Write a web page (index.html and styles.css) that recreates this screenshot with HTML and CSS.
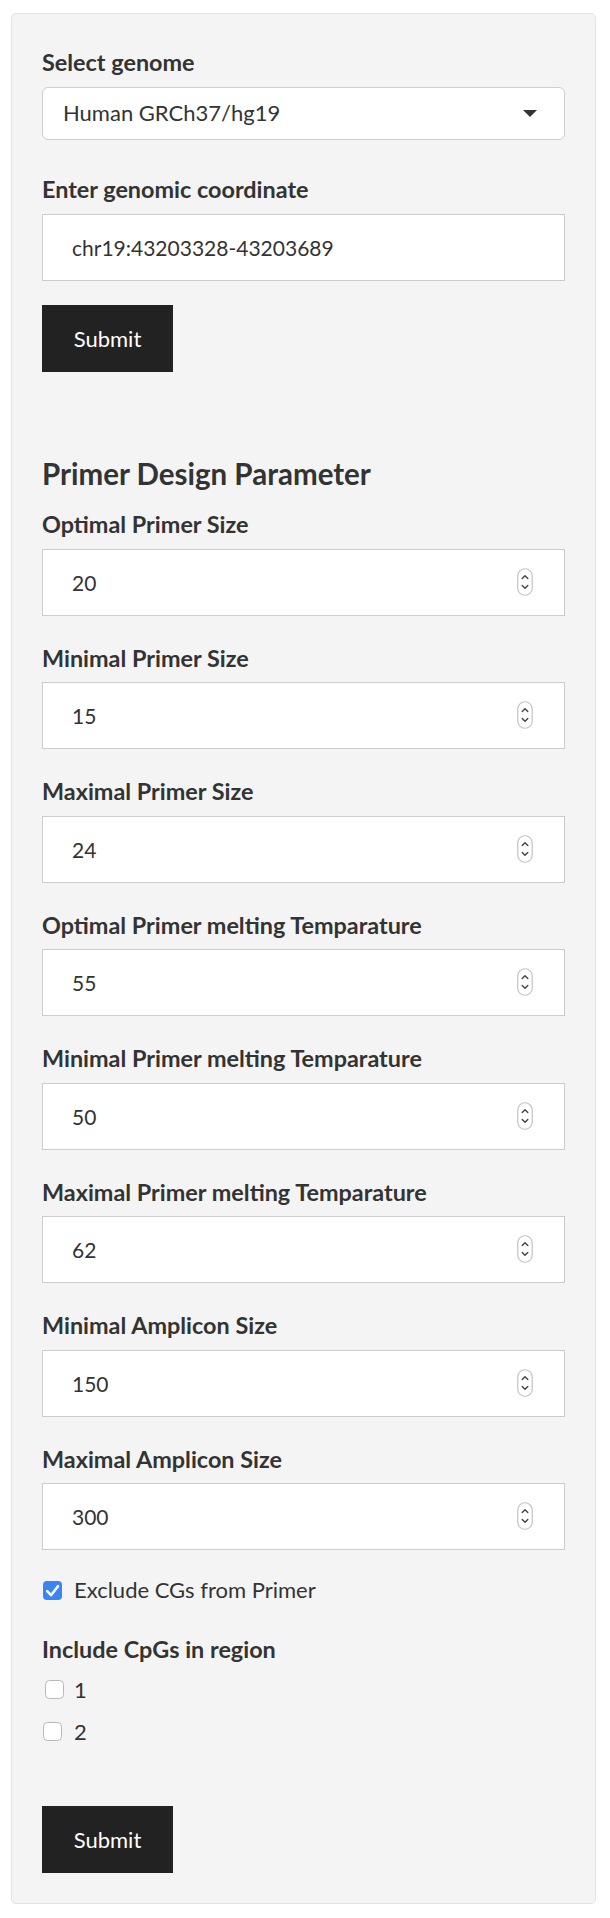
FILE: index.html
```html
<!DOCTYPE html>
<html lang="en">
<head>
<meta charset="utf-8">
<title>Primer Design</title>
<link rel="stylesheet" href="styles.css">
</head>
<body>
<form class="well">
  <div class="form-group select-group">
    <label class="control-label">Select genome</label>
    <div class="select-box">
      <span>Human GRCh37/hg19</span>
      <span class="caret"></span>
    </div>
  </div>

  <div class="form-group">
    <label class="control-label" for="coord">Enter genomic coordinate</label>
    <input class="text-input" id="coord" type="text" value="chr19:43203328-43203689">
  </div>
  <button class="btn" type="button">Submit</button>

  <h4 class="section-title">Primer Design Parameter</h4>

  <div class="form-group">
    <label class="control-label">Optimal Primer Size</label>
    <div class="num-box"><input class="num-input" type="number" value="20"><svg class="spin" width="16" height="28" viewBox="0 0 16 28"><rect x="0.75" y="0.75" width="14.5" height="26.5" rx="7.25" fill="#fff" stroke="#c4c4c4" stroke-width="1.2"/><path d="M5.2 10.6 L8 7.8 L10.8 10.6" fill="none" stroke="#444" stroke-width="1.4" stroke-linecap="round" stroke-linejoin="round"/><path d="M5.2 17.4 L8 20.2 L10.8 17.4" fill="none" stroke="#444" stroke-width="1.4" stroke-linecap="round" stroke-linejoin="round"/></svg></div>
  </div>
  <div class="form-group">
    <label class="control-label">Minimal Primer Size</label>
    <div class="num-box"><input class="num-input" type="number" value="15"><svg class="spin" width="16" height="28" viewBox="0 0 16 28"><rect x="0.75" y="0.75" width="14.5" height="26.5" rx="7.25" fill="#fff" stroke="#c4c4c4" stroke-width="1.2"/><path d="M5.2 10.6 L8 7.8 L10.8 10.6" fill="none" stroke="#444" stroke-width="1.4" stroke-linecap="round" stroke-linejoin="round"/><path d="M5.2 17.4 L8 20.2 L10.8 17.4" fill="none" stroke="#444" stroke-width="1.4" stroke-linecap="round" stroke-linejoin="round"/></svg></div>
  </div>
  <div class="form-group">
    <label class="control-label">Maximal Primer Size</label>
    <div class="num-box"><input class="num-input" type="number" value="24"><svg class="spin" width="16" height="28" viewBox="0 0 16 28"><rect x="0.75" y="0.75" width="14.5" height="26.5" rx="7.25" fill="#fff" stroke="#c4c4c4" stroke-width="1.2"/><path d="M5.2 10.6 L8 7.8 L10.8 10.6" fill="none" stroke="#444" stroke-width="1.4" stroke-linecap="round" stroke-linejoin="round"/><path d="M5.2 17.4 L8 20.2 L10.8 17.4" fill="none" stroke="#444" stroke-width="1.4" stroke-linecap="round" stroke-linejoin="round"/></svg></div>
  </div>
  <div class="form-group">
    <label class="control-label">Optimal Primer melting Temparature</label>
    <div class="num-box"><input class="num-input" type="number" value="55"><svg class="spin" width="16" height="28" viewBox="0 0 16 28"><rect x="0.75" y="0.75" width="14.5" height="26.5" rx="7.25" fill="#fff" stroke="#c4c4c4" stroke-width="1.2"/><path d="M5.2 10.6 L8 7.8 L10.8 10.6" fill="none" stroke="#444" stroke-width="1.4" stroke-linecap="round" stroke-linejoin="round"/><path d="M5.2 17.4 L8 20.2 L10.8 17.4" fill="none" stroke="#444" stroke-width="1.4" stroke-linecap="round" stroke-linejoin="round"/></svg></div>
  </div>
  <div class="form-group">
    <label class="control-label">Minimal Primer melting Temparature</label>
    <div class="num-box"><input class="num-input" type="number" value="50"><svg class="spin" width="16" height="28" viewBox="0 0 16 28"><rect x="0.75" y="0.75" width="14.5" height="26.5" rx="7.25" fill="#fff" stroke="#c4c4c4" stroke-width="1.2"/><path d="M5.2 10.6 L8 7.8 L10.8 10.6" fill="none" stroke="#444" stroke-width="1.4" stroke-linecap="round" stroke-linejoin="round"/><path d="M5.2 17.4 L8 20.2 L10.8 17.4" fill="none" stroke="#444" stroke-width="1.4" stroke-linecap="round" stroke-linejoin="round"/></svg></div>
  </div>
  <div class="form-group">
    <label class="control-label">Maximal Primer melting Temparature</label>
    <div class="num-box"><input class="num-input" type="number" value="62"><svg class="spin" width="16" height="28" viewBox="0 0 16 28"><rect x="0.75" y="0.75" width="14.5" height="26.5" rx="7.25" fill="#fff" stroke="#c4c4c4" stroke-width="1.2"/><path d="M5.2 10.6 L8 7.8 L10.8 10.6" fill="none" stroke="#444" stroke-width="1.4" stroke-linecap="round" stroke-linejoin="round"/><path d="M5.2 17.4 L8 20.2 L10.8 17.4" fill="none" stroke="#444" stroke-width="1.4" stroke-linecap="round" stroke-linejoin="round"/></svg></div>
  </div>
  <div class="form-group">
    <label class="control-label">Minimal Amplicon Size</label>
    <div class="num-box"><input class="num-input" type="number" value="150"><svg class="spin" width="16" height="28" viewBox="0 0 16 28"><rect x="0.75" y="0.75" width="14.5" height="26.5" rx="7.25" fill="#fff" stroke="#c4c4c4" stroke-width="1.2"/><path d="M5.2 10.6 L8 7.8 L10.8 10.6" fill="none" stroke="#444" stroke-width="1.4" stroke-linecap="round" stroke-linejoin="round"/><path d="M5.2 17.4 L8 20.2 L10.8 17.4" fill="none" stroke="#444" stroke-width="1.4" stroke-linecap="round" stroke-linejoin="round"/></svg></div>
  </div>
  <div class="form-group">
    <label class="control-label">Maximal Amplicon Size</label>
    <div class="num-box"><input class="num-input" type="number" value="300"><svg class="spin" width="16" height="28" viewBox="0 0 16 28"><rect x="0.75" y="0.75" width="14.5" height="26.5" rx="7.25" fill="#fff" stroke="#c4c4c4" stroke-width="1.2"/><path d="M5.2 10.6 L8 7.8 L10.8 10.6" fill="none" stroke="#444" stroke-width="1.4" stroke-linecap="round" stroke-linejoin="round"/><path d="M5.2 17.4 L8 20.2 L10.8 17.4" fill="none" stroke="#444" stroke-width="1.4" stroke-linecap="round" stroke-linejoin="round"/></svg></div>
  </div>

  <div class="check-row">
    <svg class="box" width="19" height="19" viewBox="0 0 19 19"><rect x="0" y="0" width="19" height="19" rx="4" fill="#3a84f4"/><path d="M4.2 10.2 L8 14.2 L15 5.2" fill="none" stroke="#fff" stroke-width="2.6" stroke-linecap="round" stroke-linejoin="round"/></svg>
    <span>Exclude CGs from Primer</span>
  </div>

  <div class="cpg-group">
    <label class="control-label">Include CpGs in region</label>
    <div class="check-row first">
      <svg class="box nudge" width="19" height="19" viewBox="0 0 19 19"><rect x="0.5" y="0.5" width="18" height="18" rx="4" fill="#fff" stroke="#b9b9b9"/></svg>
      <span>1</span>
    </div>
    <div class="check-row second">
      <svg class="box" width="19" height="19" viewBox="0 0 19 19"><rect x="0.5" y="0.5" width="18" height="18" rx="4" fill="#fff" stroke="#b9b9b9"/></svg>
      <span>2</span>
    </div>
  </div>

  <button class="btn btn-bottom" type="button">Submit</button>
</form>
</body>
</html>
```
FILE: styles.css
```css
html, body {
  margin: 0;
  background: #ffffff;
}
body {
  padding: 13px 14px 15px 11px;
  font-family: "Lato", "Open Sans", sans-serif;
  color: #333333;
}
.well {
  display: block;
  margin: 0;
  background: #f4f4f4;
  border: 1px solid #e2e2e2;
  border-radius: 5px;
  padding: 34px 30px 30px 30px;
}
.form-group {
  margin-bottom: 28px;
}
.select-group {
  margin-bottom: 35.7px;
}
.control-label {
  display: block;
  font-size: 23.4px;
  font-weight: 700;
  line-height: 28px;
  margin-bottom: 10.5px;
  color: #333333;
}
.select-box {
  box-sizing: border-box;
  height: 53.3px;
  display: flex;
  align-items: center;
  justify-content: space-between;
  background: #ffffff;
  border: 1px solid #cfcfcf;
  border-radius: 6px;
  padding: 0 27px 0 20px;
  font-size: 22px;
  line-height: 26px;
  color: #333333;
}
.caret {
  width: 0;
  height: 0;
  border-left: 7px solid transparent;
  border-right: 7px solid transparent;
  border-top: 7px solid #333333;
}
.text-input {
  display: block;
  box-sizing: border-box;
  width: 100%;
  height: 67px;
  margin: 0;
  padding: 0 29px;
  border: 1px solid #cccccc;
  border-radius: 0;
  background: #ffffff;
  font-family: inherit;
  font-size: 21px;
  color: #333333;
  outline: none;
}
.btn {
  display: block;
  box-sizing: border-box;
  width: 131px;
  height: 67px;
  margin: 0;
  padding: 0;
  border: none;
  border-radius: 0;
  background: #222222;
  color: #ffffff;
  font-family: inherit;
  font-size: 22px;
  text-align: center;
}
.form-group + .btn {
  margin-top: -3.5px;
}
.section-title {
  margin: 83.1px 0 18.7px 0;
  font-size: 29.5px;
  line-height: 36px;
  font-weight: 700;
  color: #333333;
}
.num-box {
  box-sizing: border-box;
  height: 67px;
  display: flex;
  align-items: center;
  background: #ffffff;
  border: 1px solid #cccccc;
}
.num-input {
  flex: 1;
  min-width: 0;
  height: 100%;
  margin: 0;
  padding: 0 0 0 29px;
  border: none;
  background: transparent;
  font-family: inherit;
  font-size: 21px;
  color: #333333;
  outline: none;
  -moz-appearance: textfield;
  appearance: textfield;
}
.num-input::-webkit-inner-spin-button,
.num-input::-webkit-outer-spin-button {
  -webkit-appearance: none;
  margin: 0;
}
.spin {
  flex: none;
  margin-right: 31px;
  margin-top: -1px;
}
.check-row {
  display: flex;
  align-items: center;
  gap: 12px;
  font-size: 22px;
  line-height: 24px;
  color: #333333;
}
.box {
  flex: none;
  margin-left: 1px;
}
.box.nudge {
  margin-left: 3px;
  margin-right: -2px;
}
.cpg-group {
  margin-top: 32.7px;
}
.cpg-group .control-label {
  margin-bottom: 0;
}
.check-row.first {
  margin-top: 15px;
}
.check-row.second {
  margin-top: 17.7px;
}
.btn-bottom {
  margin-top: 62.5px;
}
```
